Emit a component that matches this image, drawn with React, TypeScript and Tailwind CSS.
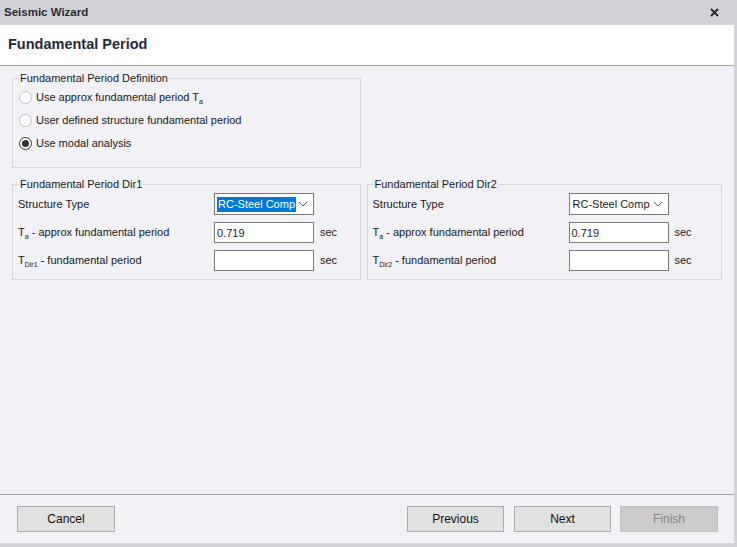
import type { ReactNode } from "react";

const font = { fontFamily: '"Liberation Sans", Arial, sans-serif' };

const Radio = ({ checked, label }: { checked?: boolean; label: ReactNode }) => (
  <div className="flex h-[23px] items-center">
    <span
      className={
        "ml-[6px] flex h-[13px] w-[13px] items-center justify-center rounded-full border bg-white " +
        (checked ? "border-[#333333]" : "border-[#c4c4c4]")
      }
    >
      {checked && <span className="h-[7px] w-[7px] rounded-full bg-[#333333]" />}
    </span>
    <span className="ml-[4px]">{label}</span>
  </div>
);

const T = ({ sub }: { sub: string }) => (
  <>
    T<span className="relative top-[3px] text-[7px]">{sub}</span>
  </>
);

const Chevron = () => (
  <svg width="10" height="6" viewBox="0 0 10 6" className="mr-[5px] shrink-0">
    <polyline points="1,1 5,5 9,1" fill="none" stroke="#555" strokeWidth="1" />
  </svg>
);

const Row = ({ label, children, unit }: { label: ReactNode; children: ReactNode; unit?: boolean }) => (
  <div className="flex h-[22px] items-center">
    <div className="w-[201px] pl-[5px]">{label}</div>
    {children}
    {unit && <span className="ml-[6px]">sec</span>}
  </div>
);

const Input = ({ value }: { value?: string }) => (
  <div className="flex h-[21px] w-[100px] items-start border border-[#7a7a7a] bg-white pl-[2px] pt-[2px] text-[#222]">
    {value}
  </div>
);

const Select = ({ focused }: { focused?: boolean }) => (
  <div className="flex h-[22px] w-[100px] items-center justify-between whitespace-nowrap border border-[#7a7a7a] bg-white pl-[2px]">
    <span className={focused ? "bg-[#0078d7] px-[1px] leading-[15px] text-white" : "px-[1px]"}>RC-Steel Comp</span>
    <Chevron />
  </div>
);

const DirGroup = ({ title, dir, width, focused }: { title: string; dir: string; width: string; focused?: boolean }) => (
  <fieldset className={"border border-[#d6d6dc] pb-[8px] pt-[1px] " + width}>
    <legend className="ml-[6px] px-[1px] leading-[16px]">{title}</legend>
    <div className="flex flex-col gap-[6px]">
      <Row label="Structure Type">
        <Select focused={focused} />
      </Row>
      <Row label={<><T sub="a" /> - approx fundamental period</>} unit>
        <Input value="0.719" />
      </Row>
      <Row label={<><T sub={dir} /> - fundamental period</>} unit>
        <Input />
      </Row>
    </div>
  </fieldset>
);

const Button = ({ children, disabled, className = "" }: { children: ReactNode; disabled?: boolean; className?: string }) => (
  <button
    className={
      "h-[26px] border text-[12px] " +
      (disabled ? "border-[#bfbfbf] bg-[#cccccc] text-[#858585] " : "border-[#adadad] bg-[#e1e1e1] text-[#111] ") +
      className
    }
  >
    {children}
  </button>
);

export default function App() {
  return (
    <div className="flex h-[547px] w-[737px] flex-col bg-[#d1d2d7] text-[11px] text-[#1a1a1a]" style={font}>
      {/* title bar */}
      <div className="flex h-[25px] items-center justify-between pl-[4px] pr-[18px]">
        <span className="text-[11.5px] font-bold text-[#2a2a33]">Seismic Wizard</span>
        <svg width="9" height="9" viewBox="0 0 9 9">
          <path d="M1 1 L8 8 M8 1 L1 8" stroke="#2b2b2b" strokeWidth="2" />
        </svg>
      </div>

      <div className="flex h-[518px] w-[734px] flex-col bg-[#f1f1f6]">
        {/* header */}
        <div className="flex h-[41px] shrink-0 items-center border-b border-[#a0a0a0] bg-white pl-[8px]">
          <span className="text-[14.5px] font-bold text-[#1f2a3a]">Fundamental Period</span>
        </div>

        {/* content */}
        <div className="flex flex-1 flex-col px-[12px] pt-[4px]">
          <fieldset className="w-[349px] border border-[#d6d6dc] pb-[12px]">
            <legend className="ml-[6px] px-[1px] leading-[16px]">Fundamental Period Definition</legend>
            <Radio label={<>Use approx fundamental period <T sub="a" /></>} />
            <Radio label="User defined structure fundamental period" />
            <Radio checked label="Use modal analysis" />
          </fieldset>

          <div className="mt-[8px] flex gap-[6px]">
            <DirGroup title="Fundamental Period Dir1" dir="Dir1" width="w-[349px]" focused />
            <DirGroup title="Fundamental Period Dir2" dir="Dir2" width="w-[356px]" />
          </div>
        </div>

        {/* footer */}
        <div className="flex h-[49px] shrink-0 items-start justify-between border-t border-[#a0a0a0] pl-[17px] pr-[16px] pt-[11px]">
          <Button className="w-[98px]">Cancel</Button>
          <div className="flex">
            <Button className="mr-[10px] w-[97px]">Previous</Button>
            <Button className="mr-[9px] w-[97px]">Next</Button>
            <Button disabled className="w-[98px]">Finish</Button>
          </div>
        </div>
      </div>
    </div>
  );
}
